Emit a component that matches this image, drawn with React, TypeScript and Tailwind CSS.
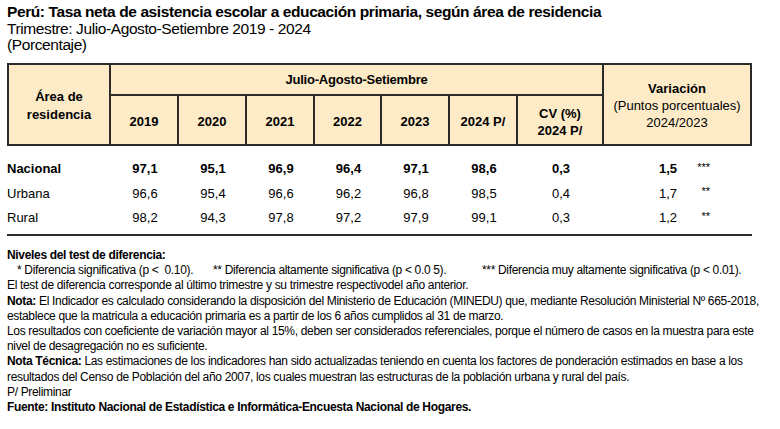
const font = { fontFamily: '"Liberation Sans", Arial, sans-serif' }

const rows = [
  { area: 'Nacional', vals: ['97,1', '95,1', '96,9', '96,4', '97,1', '98,6'], cv: '0,3', varia: '1,5', sig: '***', bold: true },
  { area: 'Urbana', vals: ['96,6', '95,4', '96,6', '96,2', '96,8', '98,5'], cv: '0,4', varia: '1,7', sig: '**', bold: false },
  { area: 'Rural', vals: ['98,2', '94,3', '97,8', '97,2', '97,9', '99,1'], cv: '0,3', varia: '1,2', sig: '**', bold: false },
]

const years = ['2019', '2020', '2021', '2022', '2023', '2024 P/']

export default function App() {
  return (
    <div className="w-[780px] h-[429px] overflow-hidden bg-white text-black px-[7px] pt-[4px]" style={font}>
      <div className="text-[15.5px] leading-[16.5px] tracking-[-0.4px] whitespace-nowrap">
        <div className="font-bold">Perú: Tasa neta de asistencia escolar a educación primaria, según área de residencia</div>
        <div>Trimestre: Julio-Agosto-Setiembre 2019 - 2024</div>
        <div>(Porcentaje)</div>
      </div>

      {/* header */}
      <div className="grid grid-cols-[102px_68px_68px_68px_67px_68px_68px_86px_146px] w-[745px] mt-[9px] bg-[#fdebc8] border-2 border-[#2b2b2b] text-[13px] font-bold leading-[17px]">
        <div className="row-span-2 flex items-center justify-center text-center border-r-2 border-[#2b2b2b] pt-[3px] leading-[18px]">
          Área de<br />residencia
        </div>
        <div className="col-span-7 h-[31px] flex items-center justify-center border-b-2 border-r-2 border-[#2b2b2b] tracking-[-0.2px]">
          Julio-Agosto-Setiembre
        </div>
        <div className="row-span-2 flex flex-col items-center justify-center text-center pt-[2px]">
          <span>Variación</span>
          <span className="font-normal">(Puntos porcentuales)</span>
          <span className="font-normal">2024/2023</span>
        </div>
        {years.map((y) => (
          <div key={y} className="h-[48px] flex items-center justify-center border-r-2 border-[#2b2b2b] pt-[4px]">{y}</div>
        ))}
        <div className="h-[48px] flex flex-col items-center justify-center text-center border-r-2 border-[#2b2b2b] pt-[4px]">
          <span>CV (%)</span>
          <span>2024 P/</span>
        </div>
      </div>

      {/* body */}
      <div className="w-[745px] pt-[11px] pb-[4px] border-b-2 border-[#2b2b2b] text-[13px]">
        {rows.map((r) => (
          <div
            key={r.area}
            className={`grid grid-cols-[104px_68px_68px_68px_67px_68px_68px_86px_148px] h-[24.5px] items-center ${r.bold ? 'font-bold' : ''}`}
          >
            <div>{r.area}</div>
            {r.vals.map((v, i) => (
              <div key={i} className="text-center">{v}</div>
            ))}
            <div className="text-center">{r.cv}</div>
            <div className="flex items-center">
              <span className="w-[73px] text-right">{r.varia}</span>
              <span className="w-[33px] text-right text-[11px] font-normal -translate-y-[2px]">{r.sig}</span>
            </div>
          </div>
        ))}
      </div>

      {/* notes */}
      <div className="mt-[12px] text-[12px] leading-[15.2px] tracking-[-0.33px] whitespace-nowrap">
        <div className="font-bold">Niveles del test de diferencia:</div>
        <div className="flex pl-[10px]">
          <span className="w-[196px]">* Diferencia significativa (p &lt;&nbsp; 0.10).</span>
          <span className="w-[269px]">** Diferencia altamente significativa (p &lt; 0.0 5).</span>
          <span>*** Diferencia muy altamente significativa (p &lt; 0.01).</span>
        </div>
        <div>El test de diferencia corresponde al último trimestre y su trimestre respectivodel año anterior.</div>
        <div>
          <span className="font-bold">Nota:</span> El Indicador es calculado considerando la disposición del Ministerio de Educación (MINEDU) que, mediante Resolución Ministerial Nº 665-2018,
        </div>
        <div>establece que la matricula a educación primaria es a partir de los 6 años cumplidos al 31 de marzo.</div>
        <div>Los resultados con coeficiente de variación mayor al 15%, deben ser considerados referenciales, porque el número de casos en la muestra para este</div>
        <div>nivel de desagregación no es suficiente.</div>
        <div>
          <span className="font-bold">Nota Técnica:</span> Las estimaciones de los indicadores han sido actualizadas teniendo en cuenta los factores de ponderación estimados en base a los
        </div>
        <div>resultados del Censo de Población del año 2007, los cuales muestran las estructuras de la población urbana y rural del país.</div>
        <div>P/ Preliminar</div>
        <div className="font-bold">Fuente: Instituto Nacional de Estadística e Informática-Encuesta Nacional de Hogares.</div>
      </div>
    </div>
  )
}
